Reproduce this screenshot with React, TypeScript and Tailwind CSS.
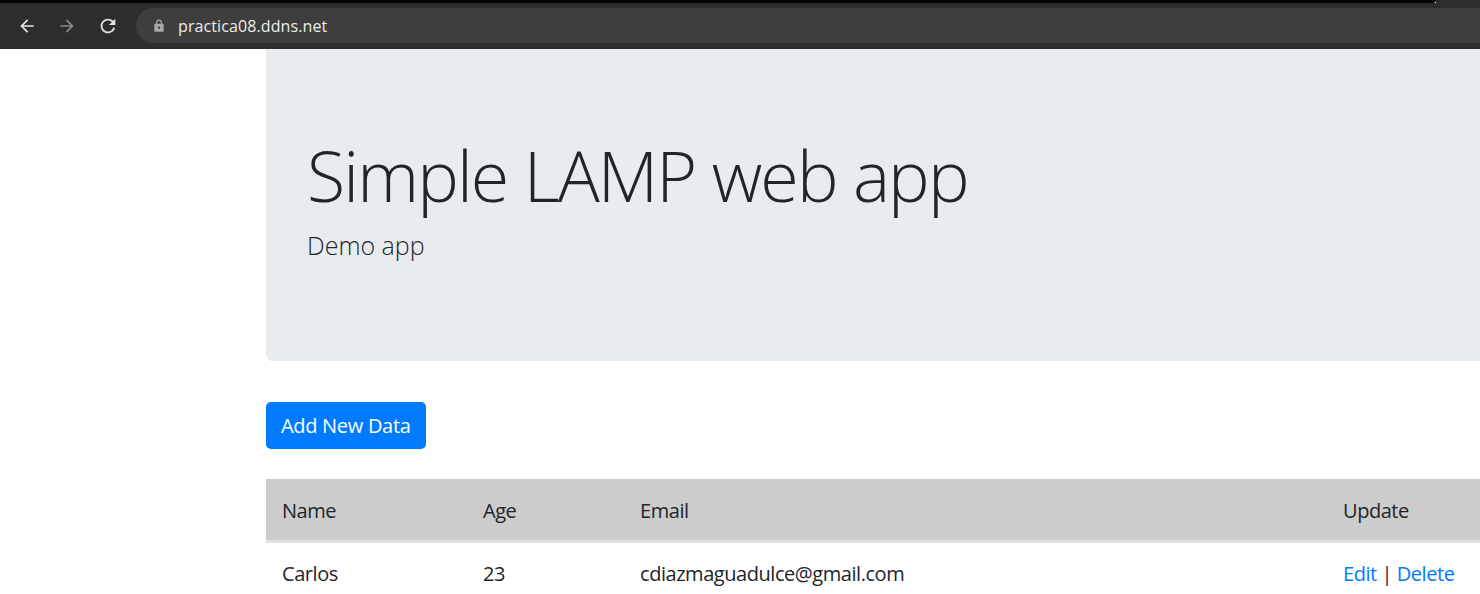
import React from "react";
import { MdArrowBack, MdArrowForward, MdRefresh, MdLock } from "react-icons/md";

const rows = [{ name: "Carlos", age: 23, email: "cdiazmaguadulce@gmail.com" }];

const App = () => {
	return (
		<div
			className="w-[1480px] h-[594px] overflow-hidden bg-white text-[#212529]"
			style={{ fontFamily: '"Open Sans", "Noto Sans", sans-serif' }}>
			{/* Barra del navegador */}
			<div className="flex h-[3px]">
				<div className="flex-1 bg-black rounded-br-[6px]" />
				<div className="w-[44px] bg-[#2d2d2d]" />
			</div>
			<div className="h-[46px] bg-[#2d2d2d] flex items-start pt-[5px]">
				<div className="flex items-center h-[35px] pl-[17px] gap-[20px]">
					<MdArrowBack className="text-[#e3e3e3] text-[20px]" />
					<MdArrowForward className="text-[#8b8b8b] text-[20px]" />
					<MdRefresh className="text-[#e3e3e3] text-[22px]" />
				</div>
				<div className="ml-[17px] flex-1 h-[35px] bg-[#3e3e3e] rounded-l-full flex items-center pl-[16px]">
					<MdLock className="text-[#a9a9a9] text-[14px]" />
					<span className="ml-[12px] text-[16px] text-[#ececec] tracking-[0.1px]">
						practica08.ddns.net
					</span>
				</div>
			</div>

			{/* Contenido */}
			<div className="ml-[266px] w-[1300px]">
				<div className="bg-[#e9ecef] rounded-bl-[6px] px-[41px] pt-[84px] pb-[77px] mb-[41px]">
					<h1 className="text-[70px] font-light leading-[84px] mb-[10px] tracking-[-1.9px]">
						Simple LAMP web app
					</h1>
					<p className="text-[25px] font-light leading-[37px] mb-[20px]">Demo app</p>
				</div>

				<button className="bg-[#007bff] text-white text-[20px] leading-[30px] px-[15px] py-[8px] rounded-[5px] h-[47px] tracking-[-0.3px]">
					Add New Data
				</button>

				<table className="mt-[30px] text-[20px] leading-[30px] border-collapse tracking-[-0.45px]">
					<thead>
						<tr className="bg-[#cccccc]">
							<th className="w-[202px] text-left font-normal px-[16px] pt-[17px] pb-[14px] border-b-[3px] border-[#dee2e6]">
								Name
							</th>
							<th className="w-[157px] text-left font-normal px-[15px] pt-[17px] pb-[14px] border-b-[3px] border-[#dee2e6]">
								Age
							</th>
							<th className="w-[703px] text-left font-normal px-[15px] pt-[17px] pb-[14px] border-b-[3px] border-[#dee2e6]">
								Email
							</th>
							<th className="w-[200px] text-left font-normal px-[15px] pt-[17px] pb-[14px] border-b-[3px] border-[#dee2e6]">
								Update
							</th>
						</tr>
					</thead>
					<tbody>
						{rows.map((r) => (
							<tr key={r.email}>
								<td className="px-[16px] pt-[16px] pb-[15px]">{r.name}</td>
								<td className="px-[15px] pt-[16px] pb-[15px]">{r.age}</td>
								<td className="px-[15px] pt-[16px] pb-[15px]">{r.email}</td>
								<td className="px-[15px] pt-[16px] pb-[15px]">
									<a href="#" className="text-[#007bff]">Edit</a> |{" "}
									<a href="#" className="text-[#007bff]">Delete</a>
								</td>
							</tr>
						))}
					</tbody>
				</table>
			</div>
		</div>
	);
};

export default App;
